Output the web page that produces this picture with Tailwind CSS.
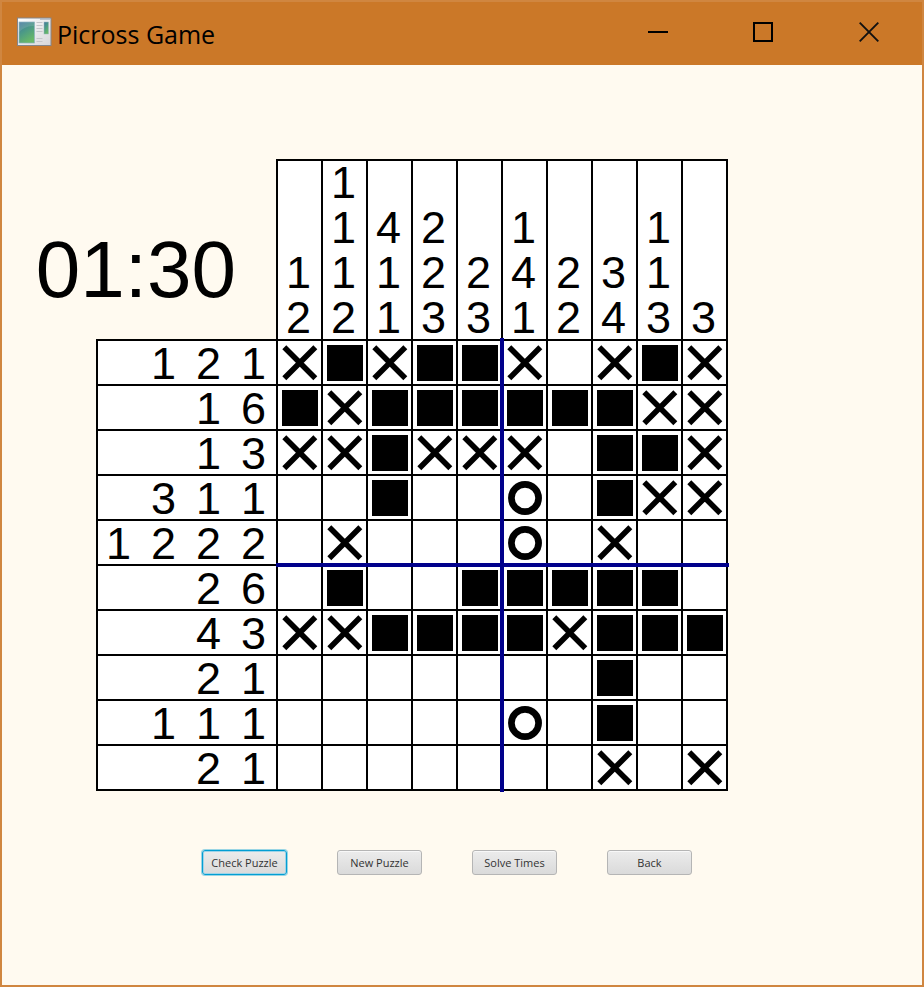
<!DOCTYPE html>
<html lang="en">
<head>
<meta charset="utf-8">
<title>Picross Game</title>
<script src="https://cdn.jsdelivr.net/npm/@tailwindcss/browser@4"></script>
</head>
<body class="bg-[#fffaf0] text-black">
<div class="flex min-h-screen flex-col border-2 border-[#d08640]">
  <header class="flex h-[63px] shrink-0 items-start bg-[#cb7828]">
    <svg class="ml-[14px] mt-[14px] h-[31px] w-[36px] shrink-0" viewBox="0 0 36 31" aria-hidden="true">
      <defs>
        <linearGradient id="pane" x1="0" y1="0" x2="0.5" y2="1"><stop offset="0" stop-color="#4476a0"/><stop offset="0.5" stop-color="#4c9a86"/><stop offset="1" stop-color="#68b868"/></linearGradient>
        <linearGradient id="frame" x1="0" y1="0" x2="1" y2="1"><stop offset="0" stop-color="#ffffff"/><stop offset="1" stop-color="#d6d6da"/></linearGradient>
      </defs>
      <rect x="1.500" y="2" width="33.500" height="27.500" fill="url(#frame)" stroke="#85858a" stroke-width="1"/>
      <path d="M24 3h10" stroke="#a8b0bc" stroke-width="1.400"/>
      <rect x="3" y="6" width="15.500" height="21" fill="url(#pane)" stroke="#8db4c0" stroke-width="0.700"/>
      <path d="M3.200 16C8 11 13 10 18.300 10V6.200H3.200z" fill="#fff" opacity="0.120"/>
      <path d="M20.500 6.500h6M20.500 9.500h6M20.500 12.500h6M20.500 15.500h6M20.500 22.500h6M20.500 25.500h6" stroke="#c4c6ca" stroke-width="1.200"/>
      <rect x="28" y="6" width="4.500" height="12" fill="url(#pane)" stroke="#9ab8bc" stroke-width="0.500"/>
    </svg>
    <h1 class="ml-[5px] mt-[14px] flex-1 whitespace-nowrap font-['Open_Sans','Noto_Sans',sans-serif] text-[25px] leading-[36px]">Picross Game</h1>
    <div class="flex">
      <button type="button" aria-label="Minimize" class="flex h-[60px] w-[105px] items-center justify-center"><svg class="h-[20px] w-[20px]" viewBox="0 0 20 20"><path d="M0 10h20" stroke="#000" stroke-width="2"/></svg></button>
      <button type="button" aria-label="Maximize" class="flex h-[60px] w-[105px] items-center justify-center"><svg class="h-[20px] w-[20px]" viewBox="0 0 20 20"><rect x="1" y="1" width="18" height="18" fill="none" stroke="#000" stroke-width="2"/></svg></button>
      <button type="button" aria-label="Close" class="flex h-[60px] w-[107px] items-center justify-center"><svg class="h-[20px] w-[20px]" viewBox="0 0 20 20"><path d="M.7.7l18.600 18.600M19.300.7.7 19.300" stroke="#111" stroke-width="1.900"/></svg></button>
    </div>
  </header>

  <main class="flex flex-1 flex-col items-start pt-[94px] pb-10">
    <div class="relative ml-[94px]">
      <table class="w-[632px] table-fixed border-separate border-spacing-0 font-['Liberation_Sans',Arial,sans-serif] text-[45px] leading-[45px]">
        <thead id="head"></thead>
        <tbody id="body"></tbody>
      </table>
      <div class="absolute -bottom-px left-[404px] h-[454px] w-1 bg-[#00008b]"></div>
      <div class="absolute -right-px bottom-[224px] h-1 w-[453px] bg-[#00008b]"></div>
    </div>

    <div class="ml-[200px] mt-[59px] flex gap-[50px] font-['Open_Sans','Noto_Sans',sans-serif] text-[11px] leading-[15px] text-[#333]">
      <button type="button" class="h-[25px] w-[85px] whitespace-nowrap rounded-[3px] border border-[#039ed3] bg-linear-to-b from-[#ececec] to-[#dadada] shadow-[0_0_0_1px_#039ed366,inset_0_0_0_1px_#9fd4e8]">Check Puzzle</button>
      <button type="button" class="h-[25px] w-[85px] whitespace-nowrap rounded-[3px] border border-[#b5b5b5] bg-linear-to-b from-[#ececec] to-[#dadada] shadow-[inset_0_1px_0_#f8f8f8]">New Puzzle</button>
      <button type="button" class="h-[25px] w-[85px] whitespace-nowrap rounded-[3px] border border-[#b5b5b5] bg-linear-to-b from-[#ececec] to-[#dadada] shadow-[inset_0_1px_0_#f8f8f8]">Solve Times</button>
      <button type="button" class="h-[25px] w-[85px] whitespace-nowrap rounded-[3px] border border-[#b5b5b5] bg-linear-to-b from-[#ececec] to-[#dadada] shadow-[inset_0_1px_0_#f8f8f8]">Back</button>
    </div>
  </main>
</div>

<script>
const columnClues = ['12', '1112', '411', '223', '23', '141', '22', '34', '113', '3'];
const rowClues = ['121', '16', '13', '311', '1222', '26', '43', '21', '111', '21'];
const board = [
  'X#X##X.X#X',
  '#X######XX',
  'XX#XXX.##X',
  '..#..O.#XX',
  '.X...O.X..',
  '.#..#####.',
  'XX####X###',
  '.......#..',
  '.....O.#..',
  '.......X.X',
];
const marks = {
  '#': '<rect x="4" y="4" width="36" height="36"/>',
  'X': '<path d="M6.300 6.300l31 31M37.300 6.300l-31 31" stroke="#000" stroke-width="5.600"/>',
  'O': '<circle cx="22" cy="22" r="13.600" fill="none" stroke="#000" stroke-width="6.700"/>',
  '.': '',
};
const names = { '#': 'Filled', 'X': 'Crossed', 'O': 'Circled', '.': 'Empty' };
const digits = (clue) => [...clue].map((d) => `<span class="block w-[45px] shrink-0 text-center">${d}</span>`).join('');

document.getElementById('head').innerHTML = `<tr>
  <td class="h-[180px] w-[180px] p-0"><div class="flex h-[180px] items-end justify-end pr-10 pb-[29px]"><time class="text-[80px] leading-[80px]">01:30</time></div></td>
  ${columnClues.map((clue, i) => `<th scope="col" class="${i === 9 ? 'w-[47px] border-r-2' : 'w-[45px]'} h-[180px] border-t-2 border-l-2 border-black bg-white p-0 font-normal">
    <div class="-mb-px flex h-[179px] w-[43px] flex-col items-center justify-end pr-0.5">${digits(clue)}</div></th>`).join('')}
</tr>`;

document.getElementById('body').innerHTML = board.map((row, r) => {
  const edge = r === 9 ? 'h-[47px] border-b-2' : 'h-[45px]';
  return `<tr>
    <th scope="row" class="${edge} border-t-2 border-l-2 border-black bg-white p-0 font-normal"><div class="flex h-[43px] w-[178px] justify-end">${digits(rowClues[r])}</div></th>
    ${[...row].map((m, c) => `<td class="${edge} ${c === 9 ? 'border-r-2' : ''} border-t-2 border-l-2 border-black bg-white p-0"><svg class="block h-[43px] w-[43px]" viewBox="0 0 43 43" role="img" aria-label="${names[m]}">${marks[m]}</svg></td>`).join('')}
  </tr>`;
}).join('');
</script>
</body>
</html>
